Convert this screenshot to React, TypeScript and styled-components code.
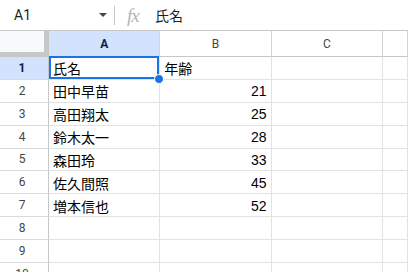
import styled, { createGlobalStyle } from "styled-components";

const GlobalStyle = createGlobalStyle`
  html, body {
    margin: 0;
    padding: 0;
    background: #ffffff;
    overflow: hidden;
  }
  * { box-sizing: border-box; }
`;

const Page = styled.div`
  width: 408px;
  height: 272px;
  overflow: hidden;
  font-family: "Liberation Sans", Arial, "Noto Sans CJK JP", sans-serif;
  color: #000;
`;

const FormulaBar = styled.div`
  height: 31px;
  display: flex;
  align-items: center;
  border-bottom: 1px solid #c7c7c7;
`;

const NameBox = styled.div`
  width: 114px;
  height: 100%;
  display: flex;
  align-items: center;
  justify-content: space-between;
  padding: 0 7px 0 14px;
  font-family: Roboto, "Liberation Sans", sans-serif;
  font-size: 14px;
  color: #1f1f1f;
`;

const Caret = styled.span`
  width: 0;
  height: 0;
  border-left: 4.5px solid transparent;
  border-right: 4.5px solid transparent;
  border-top: 4.5px solid #444746;
`;

const Divider = styled.span`
  width: 1px;
  height: 19px;
  background: #c7c7c7;
`;

const Fx = styled.span`
  margin-left: 12px;
  width: 18px;
  font-family: "Liberation Serif", serif;
  font-style: italic;
  font-size: 19px;
  line-height: 1;
  letter-spacing: -1px;
  color: #b4b4b4;
`;

const FormulaText = styled.span`
  margin-left: 10px;
  font-size: 14px;
  font-family: "Liberation Sans", "Noto Sans CJK JP", sans-serif;
  color: #1f1f1f;
`;

const Grid = styled.div`
  display: grid;
  grid-template-columns: 49px repeat(3, 111.33px) 1fr;
  grid-template-rows: 26px repeat(10, 22.875px);
`;

const Corner = styled.div`
  background: #f8f9fa;
  border-right: 5px solid #c7c7c7;
  border-bottom: 5px solid #c7c7c7;
`;

const ColHeader = styled.div<{ $active?: boolean }>`
  display: flex;
  align-items: center;
  justify-content: center;
  font-family: Roboto, "Liberation Sans", sans-serif;
  font-size: 12px;
  font-weight: ${(p) => (p.$active ? 700 : 400)};
  color: ${(p) => (p.$active ? "#0b1f46" : "#444746")};
  background: ${(p) => (p.$active ? "#d3e3fd" : "#ffffff")};
  border-right: 1px solid #d4d4d4;
  border-bottom: 1px solid #c7c7c7;
`;

const RowHeader = styled.div<{ $active?: boolean }>`
  display: flex;
  align-items: center;
  justify-content: center;
  padding-right: 4px;
  font-family: Roboto, "Liberation Sans", sans-serif;
  font-size: 12px;
  font-weight: ${(p) => (p.$active ? 700 : 400)};
  color: ${(p) => (p.$active ? "#0b1f46" : "#444746")};
  background: ${(p) => (p.$active ? "#d3e3fd" : "#ffffff")};
  border-right: 1px solid #c7c7c7;
  border-bottom: 1px solid #dadada;
`;

const Cell = styled.div<{ $num?: boolean; $selected?: boolean }>`
  position: relative;
  display: flex;
  align-items: center;
  justify-content: ${(p) => (p.$num ? "flex-end" : "flex-start")};
  padding: 1px 4px 0 4px;
  font-size: 14px;
  white-space: nowrap;
  color: #000;
  border-right: 1px solid #e2e2e2;
  border-bottom: 1px solid #e2e2e2;

  ${(p) =>
    p.$selected &&
    `
    &::after {
      content: "";
      position: absolute;
      top: -1px;
      left: 0;
      right: 0;
      bottom: 0;
      border: 2px solid #1a73e8;
    }
  `}
`;

const Handle = styled.span`
  position: absolute;
  right: -5px;
  bottom: -5px;
  width: 10px;
  height: 10px;
  border-radius: 50%;
  background: #1a73e8;
  border: 1px solid #ffffff;
  z-index: 2;
`;

const rows: [string, string][] = [
  ["氏名", "年齢"],
  ["田中早苗", "21"],
  ["高田翔太", "25"],
  ["鈴木太一", "28"],
  ["森田玲", "33"],
  ["佐久間照", "45"],
  ["増本信也", "52"],
  ["", ""],
  ["", ""],
  ["", ""],
];

export default function App() {
  return (
    <Page>
      <GlobalStyle />
      <FormulaBar>
        <NameBox>
          A1
          <Caret />
        </NameBox>
        <Divider />
        <Fx>fx</Fx>
        <FormulaText>氏名</FormulaText>
      </FormulaBar>
      <Grid>
        <Corner />
        <ColHeader $active>A</ColHeader>
        <ColHeader>B</ColHeader>
        <ColHeader>C</ColHeader>
        <ColHeader />
        {rows.map(([name, age], i) => {
          const isNum = i > 0 && age !== "";
          return [
            <RowHeader key={`h${i}`} $active={i === 0}>
              {i + 1}
            </RowHeader>,
            <Cell key={`a${i}`} $selected={i === 0}>
              {name}
              {i === 0 && <Handle />}
            </Cell>,
            <Cell key={`b${i}`} $num={isNum}>
              {age}
            </Cell>,
            <Cell key={`c${i}`} />,
            <Cell key={`d${i}`} />,
          ];
        })}
      </Grid>
    </Page>
  );
}
